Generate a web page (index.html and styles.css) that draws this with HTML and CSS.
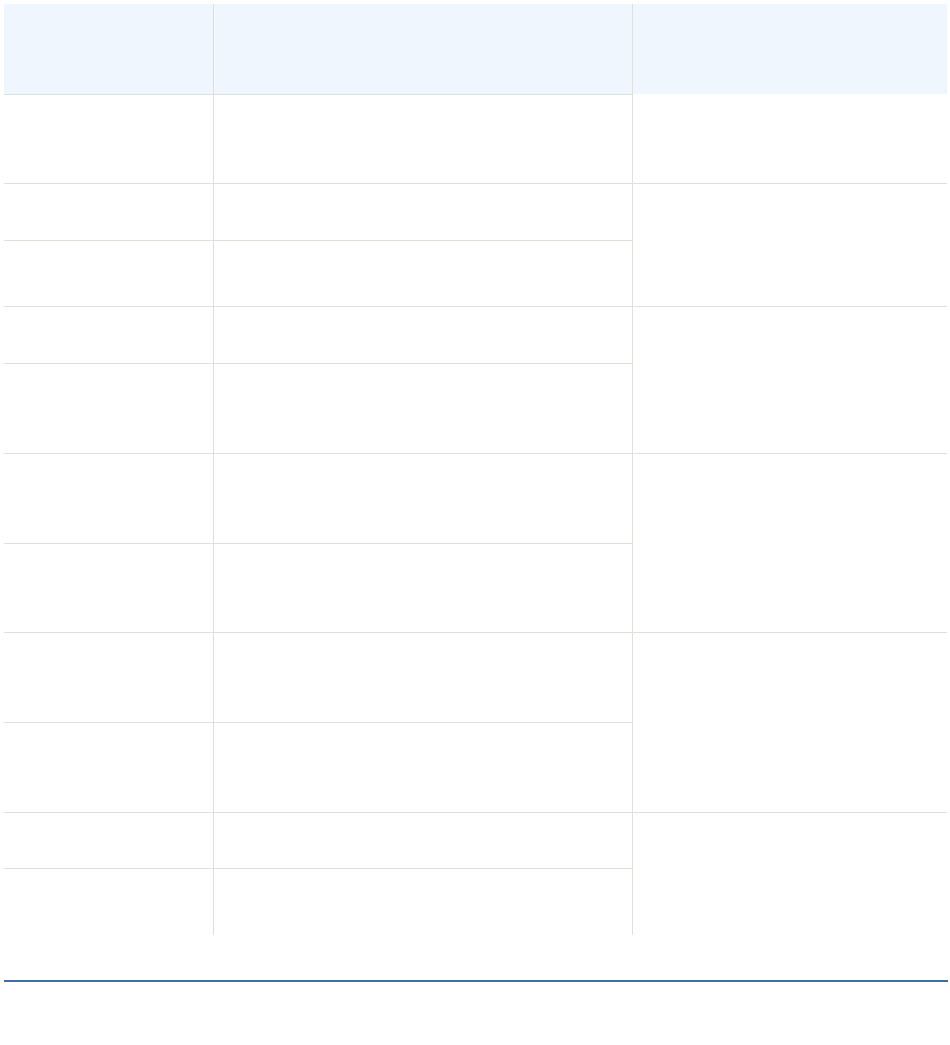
FILE: index.html
```html
<!DOCTYPE html>
<html lang="en">
  <head>
    <meta charset="UTF-8" />
    <meta name="viewport" content="width=device-width, initial-scale=1.0" />
    <title>Table</title>
    <link rel="stylesheet" href="styles.css">
  </head>

  <body>
    <div class="page">
      <div class="grid">
        <div class="cell head"></div>
        <div class="cell head"></div>
        <div class="cell head last-col"></div>

        <div class="cell"></div>
        <div class="cell"></div>
        <div class="cell last-col"></div>

        <div class="cell"></div>
        <div class="cell"></div>
        <div class="cell last-col span-2"></div>
        <div class="cell"></div>
        <div class="cell"></div>

        <div class="cell"></div>
        <div class="cell"></div>
        <div class="cell last-col span-2"></div>
        <div class="cell"></div>
        <div class="cell"></div>

        <div class="cell"></div>
        <div class="cell"></div>
        <div class="cell last-col span-2"></div>
        <div class="cell"></div>
        <div class="cell"></div>

        <div class="cell"></div>
        <div class="cell"></div>
        <div class="cell last-col span-2"></div>
        <div class="cell"></div>
        <div class="cell"></div>

        <div class="cell"></div>
        <div class="cell"></div>
        <div class="cell last-col span-2 no-bottom"></div>
        <div class="cell no-bottom"></div>
        <div class="cell no-bottom"></div>
      </div>

      <div class="rule"></div>
    </div>
  </body>
</html>
```

FILE: styles.css
```css
* {
  box-sizing: border-box;
  margin: 0;
  padding: 0;
}

body {
  font-family: 'Liberation Sans', Arial, sans-serif;
  background: #fff;
  color: #222;
}

.page {
  padding: 4px;
}

.grid {
  display: grid;
  width: 943px;
  grid-template-columns: 210px 419px 314px;
  grid-template-rows: 91px 89px 57px 66px 57px 90px 90px 89px 90px 90px 56px 66px;
}

.cell {
  border-bottom: 1px solid #e1dfdc;
  border-right: 1px solid #e1dfdc;
}

.cell.head {
  background: #f0f6fe;
}

.cell.head.last-col {
  border-bottom-color: #fff;
}

.cell.last-col {
  border-right: none;
}

.cell.span-2 {
  grid-row: span 2;
}

.cell.no-bottom {
  border-bottom: none;
}

.rule {
  margin-top: 45px;
  width: 944px;
  height: 2px;
  background: #3e6ea8;
}
```
